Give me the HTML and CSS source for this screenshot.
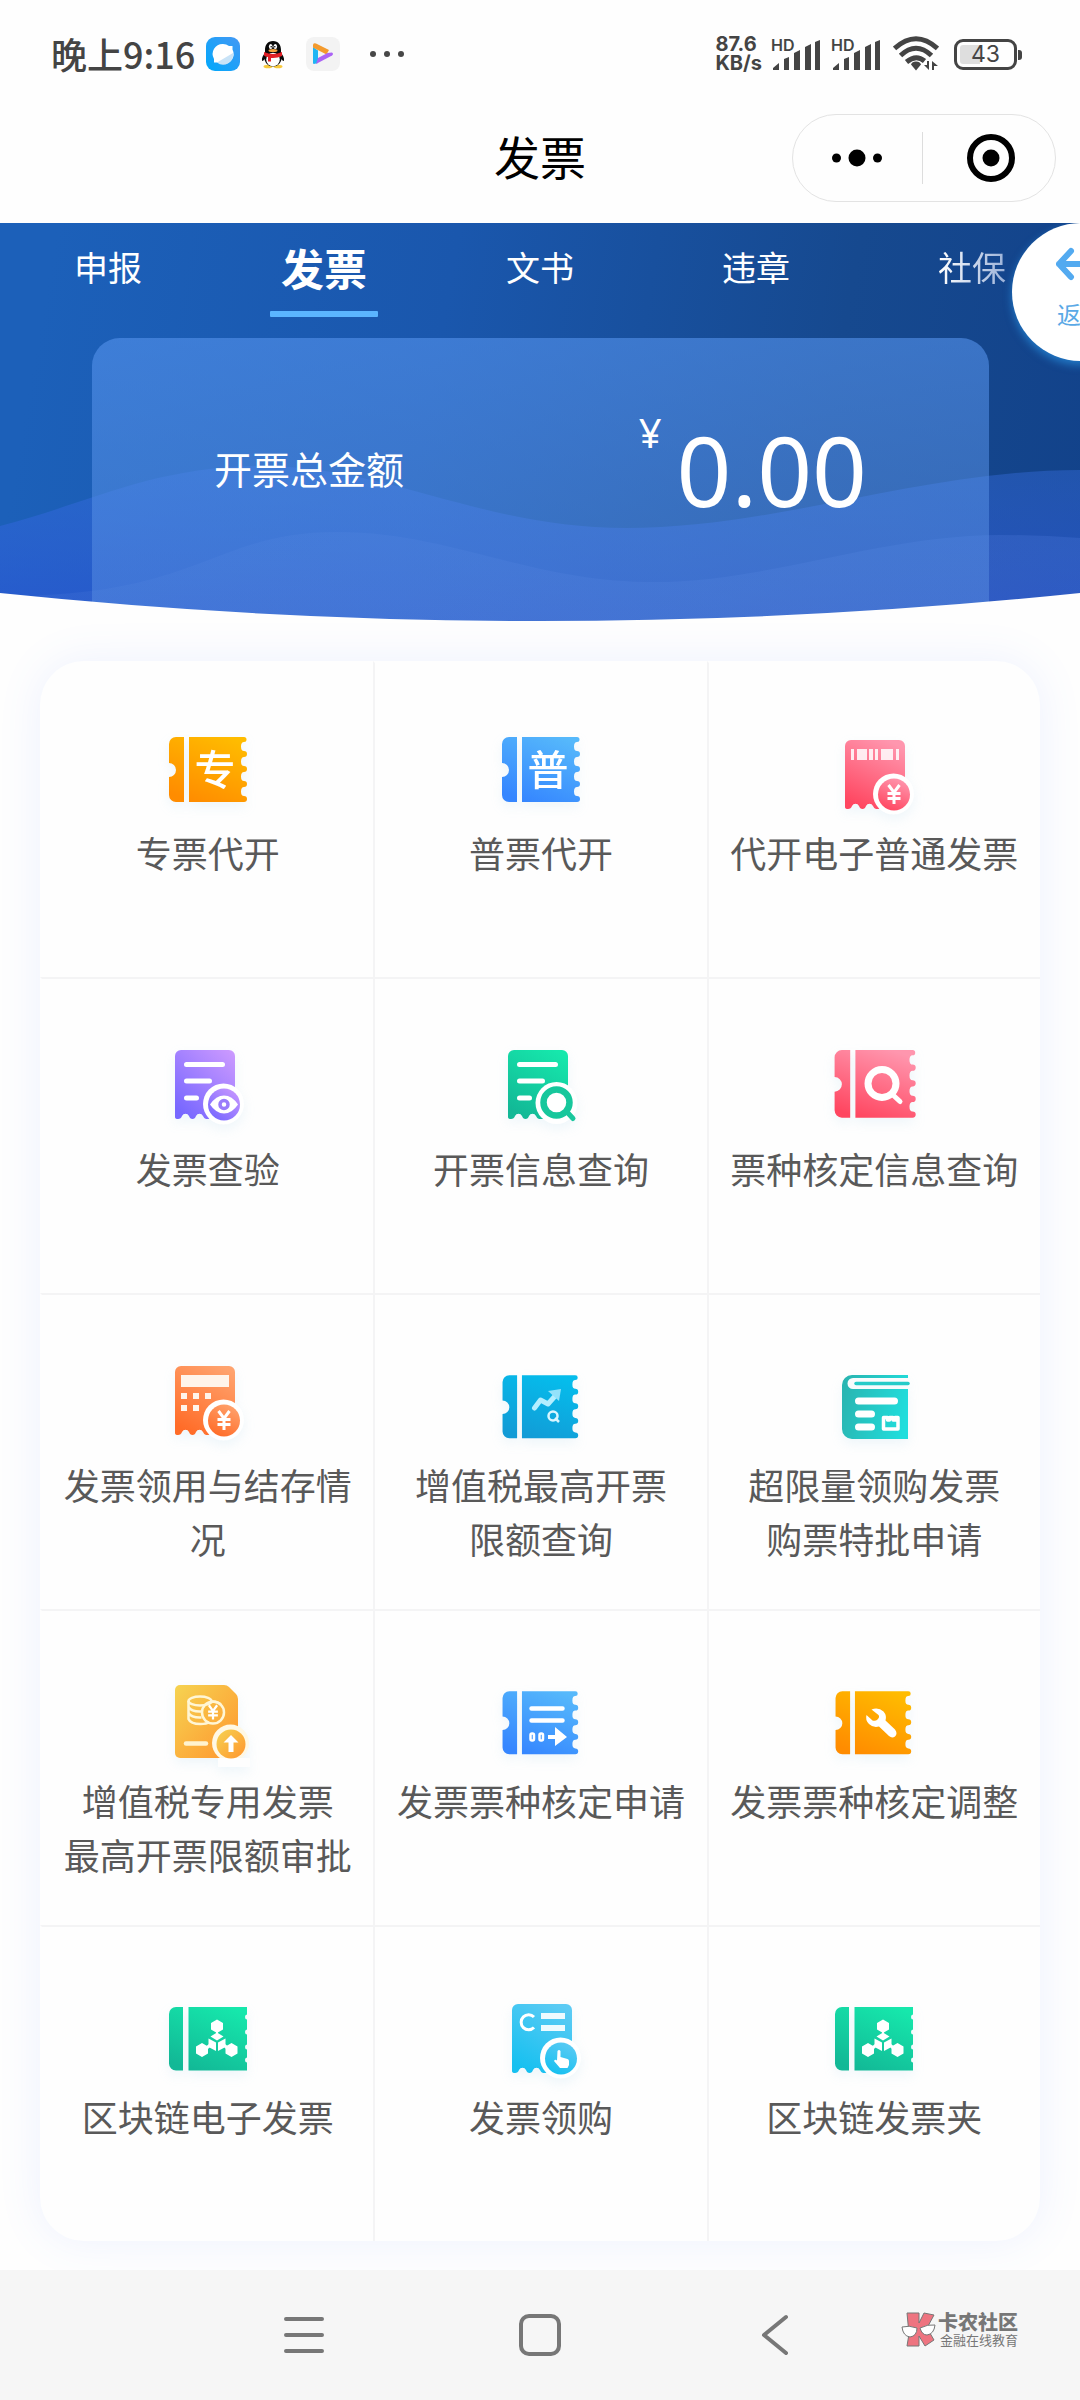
FILE: index.html
```html
<!DOCTYPE html>
<html lang="zh-CN">
<head>
  <meta charset="UTF-8" />
  <meta name="viewport" content="width=device-width, initial-scale=1.0"/>
  <title>发票</title>
  <link rel="stylesheet" href="styles.css">
</head>
<body>
  <!-- shared shapes and gradients -->
  <svg class="defs" width="0" height="0" aria-hidden="true">
    <defs>
      <path id="ticket" d="M30 26v65H22a7 7 0 0 1-7-7V66a7 7 0 0 0 0-14V33a7 7 0 0 1 7-7zM35 26H90a2.5 2.5 0 0 1 0 5a3 4.5 0 0 0 0 9a3 3 0 0 1 0 6a3 4.5 0 0 0 0 9a3 3 0 0 1 0 6a3 4.5 0 0 0 0 9a3 3 0 0 1 0 6a3 4.5 0 0 0 0 9a3 3 0 0 1 0 6H35z"/>
      <path id="receipt" d="M21 90V29a6 6 0 0 1 6-6H75a6 6 0 0 1 6 6V92H52q-2-.5-3-3a3.8 3.8 0 0 0-7 0q-1 3-3.5 3t-3.5-3a3.8 3.8 0 0 0-7 0q-1 3-4 3q-3 0-3-2z"/>
      <path id="book-ticket" d="M29 32v63.5H22a7 7 0 0 1-7-7V39a7 7 0 0 1 7-7zM34.5 32H93v7.5a2 2.5 0 0 0 0 5v10a2 2.5 0 0 0 0 5v10a2 2.5 0 0 0 0 5v8a2 2.5 0 0 0 0 5v8H34.5z"/>
      <g id="yen" fill="none" stroke="#fff" stroke-width="3">
        <path d="M-5.5-9L0-1.5L5.5-9M0-1.5V10M-6.5-.5h13M-6.5 4.5h13"/>
      </g>
      <g id="blocks" fill="#fff">
        <path d="M63 44.5l6 3.5v6.5l-6 3.5-6-3.5V48zM48 68l6 3.5v7l-6 3.5-6-3.5v-7zM77.5 68l6 3.5v7l-6 3.5-6-3.5v-7z"/>
        <path d="M63 57.5l6.5 4-6.5 4-6.5-4zM54.5 63.5l7.5 4V76l-7.5-4zM71.5 63.5l-7.5 4V76l7.5-4z"/>
        <path d="M62 57h2v4h-2zM50 73l5-4 1 3-4 4zM76 73l-5-4-1 3 4 4z"/>
      </g>
      <linearGradient id="orange" x1=".8" y1="0" x2=".3" y2="1"><stop stop-color="#ffbc00"/><stop offset="1" stop-color="#ff8c00"/></linearGradient>
      <linearGradient id="blue" x1=".8" y1="0" x2=".3" y2="1"><stop stop-color="#56b9fb"/><stop offset="1" stop-color="#3586ff"/></linearGradient>
      <linearGradient id="pink" x1=".7" y1="0" x2=".3" y2="1"><stop stop-color="#ff96ae"/><stop offset="1" stop-color="#ff4660"/></linearGradient>
      <linearGradient id="purple" x1="1" y1="0" x2=".2" y2="1"><stop stop-color="#ce9bff"/><stop offset="1" stop-color="#7767ff"/></linearGradient>
      <linearGradient id="green" x1=".8" y1="0" x2=".3" y2="1"><stop stop-color="#16e8ac"/><stop offset="1" stop-color="#12b896"/></linearGradient>
      <linearGradient id="coral" x1=".8" y1="0" x2=".3" y2="1"><stop stop-color="#ffa36e"/><stop offset="1" stop-color="#ff6c28"/></linearGradient>
      <linearGradient id="cyan" x1=".7" y1="0" x2=".3" y2="1"><stop stop-color="#05bdec"/><stop offset="1" stop-color="#129bd6"/></linearGradient>
      <linearGradient id="teal" x1="0" y1=".4" x2="1" y2=".6"><stop stop-color="#29b6b2"/><stop offset="1" stop-color="#20dedd"/></linearGradient>
      <linearGradient id="gold" x1="0" y1="0" x2="1" y2="1"><stop stop-color="#f6d351"/><stop offset="1" stop-color="#ff952e"/></linearGradient>
      <linearGradient id="sky" x1=".8" y1="0" x2=".3" y2="1"><stop stop-color="#5ccbf4"/><stop offset="1" stop-color="#16c0f0"/></linearGradient>
    </defs>
  </svg>

  <header class="top">
    <div class="status">
      <span class="time">晚上9:16</span>
      <svg class="app" viewBox="0 0 34 34" aria-hidden="true">
        <defs><linearGradient id="msg" x1="1" y1="0" x2="0" y2="1"><stop stop-color="#4498f4"/><stop offset="1" stop-color="#00a8fb"/></linearGradient></defs>
        <rect width="34" height="34" rx="9" fill="url(#msg)"/>
        <path d="M17 7a10 10 0 0 1 6 2h3.500v3.500A10 10 0 0 1 17 27a10 10 0 0 1-5.500-1.500H8V22A10 10 0 0 1 17 7z" fill="#fff"/>
        <path d="M27 16a10 10 0 0 1-16 9.500z" fill="#c9e3f7"/>
      </svg>
      <svg class="app" viewBox="0 0 34 34" aria-hidden="true">
        <ellipse cx="12" cy="29.500" rx="4.500" ry="1.800" fill="#f8c93c"/><ellipse cx="22" cy="29.500" rx="4.500" ry="1.800" fill="#f8c93c"/>
        <path d="M17 4c-5.500 0-8 4-8 9v3c-2 2-3.500 5-3 8 1 0 2-1 2.500-2 .5 4 4 7.500 8.500 7.500s8-3.500 8.500-7.500c.5 1 1.500 2 2.500 2 .5-3-1-6-3-8v-3c0-5-2.500-9-8-9z" fill="#090909"/>
        <circle cx="17" cy="22.500" r="6.800" fill="#fff"/>
        <ellipse cx="14.700" cy="9.500" rx="1.800" ry="2.500" fill="#fff"/><ellipse cx="19.300" cy="9.500" rx="1.800" ry="2.500" fill="#fff"/>
        <circle cx="15.200" cy="9.800" r=".8"/><circle cx="18.800" cy="9.800" r=".8"/>
        <ellipse cx="17" cy="13.500" rx="4.500" ry="1.500" fill="#f7a23c"/>
        <path d="M8 15q9 4 18 0v4q-5 2.500-11 2v3.500h-3V20q-3-.5-4-1.500z" fill="#e21f25"/>
      </svg>
      <svg class="app" viewBox="0 0 34 34" aria-hidden="true">
        <rect width="34" height="34" rx="8" fill="#f3f3f3"/>
        <path d="M7 10l5 3.500V26l-4 1q-1 0-1-1z" fill="#1fb5f4"/>
        <path d="M7 7.500q1-2 3-1L23 13l-2.500 4.500L7 10.500z" fill="#f39a2d"/>
        <path d="M26 15.500q2 1.500 0 3L10 27l2-6 9.500-5z" fill="#ab63f5"/>
      </svg>
      <svg class="more" viewBox="0 0 34 8" aria-hidden="true"><g fill="#474747"><circle cx="3" cy="4" r="3"/><circle cx="17" cy="4" r="3"/><circle cx="31" cy="4" r="3"/></g></svg>

      <div class="speed"><span>87.6</span><span>KB/s</span></div>
      <span class="signal"><small>HD</small>
        <svg viewBox="0 0 48 32" aria-hidden="true"><path d="M0 31v-2l6-5v7zM11 31V20l5-2v13zM21 31V14l6-3v20zM32 31V8l6-3v26zM42 31V3l5-2v30z"/></svg>
      </span>
      <span class="signal"><small>HD</small>
        <svg viewBox="0 0 48 32" aria-hidden="true"><path d="M0 31v-2l6-5v7zM11 31V20l5-2v13zM21 31V14l6-3v20zM32 31V8l6-3v26zM42 31V3l5-2v30z"/></svg>
      </span>
      <svg class="wifi" viewBox="0 0 46 36" aria-hidden="true">
        <g fill="none" stroke="#444" stroke-width="5"><path d="M1.500 12.500Q23-7 44.500 12.500M7.500 19.500Q23 5 38.500 19.500M13.500 26Q23 18 31.500 25"/></g>
        <path d="M23 25.500q4 0 5 3l-5 6-5-6q1-3 5-3z" fill="#444"/>
        <path d="M36 25v9l-5-5h3v-4zM39 34v-9l6 5h-4v4z" fill="#444"/>
      </svg>
      <span class="battery">43</span>
    </div>

    <div class="title-bar">
      <h1>发票</h1>
      <div class="capsule">
        <button aria-label="更多"><svg width="50" height="20" viewBox="0 0 50 20"><circle cx="4.500" cy="10" r="4.500"/><circle cx="25" cy="10" r="8.500"/><circle cx="45.500" cy="10" r="4.500"/></svg></button>
        <button aria-label="关闭"><svg width="50" height="50" viewBox="0 0 50 50"><circle cx="25" cy="25" r="21" fill="none" stroke="#000" stroke-width="6"/><circle cx="25" cy="25" r="8.500"/></svg></button>
      </div>
    </div>
  </header>

  <section class="hero">
    <svg class="hero-bg" viewBox="0 0 1080 398" preserveAspectRatio="none" aria-hidden="true">
      <defs>
        <linearGradient id="wave1" x1="0" y1="0" x2="0" y2="1"><stop stop-color="#3a72e6" stop-opacity=".38"/><stop offset="1" stop-color="#2c54d8" stop-opacity=".62"/></linearGradient>
        <linearGradient id="wave2" x1="0" y1="0" x2="1" y2="0"><stop stop-color="#5a86e0" stop-opacity=".15"/><stop offset="1" stop-color="#5a84e8" stop-opacity=".22"/></linearGradient>
      </defs>
      <path fill="url(#wave1)" d="M0 303C90 280 150 244 260 243C390 243 480 305 626 305C780 305 920 247 1080 247V398H0z"/>
      <path fill="url(#wave2)" d="M40 372C200 366 220 309 337 309C450 309 530 359 654 359C770 359 880 312 1000 312Q1040 312 1080 315V398H0z"/>
    </svg>

    <nav class="tabs">
      <a href="#">申报</a>
      <a href="#" class="active">发票</a>
      <a href="#">文书</a>
      <a href="#">违章</a>
      <a href="#" class="faded">社保</a>
    </nav>

    <div class="total">
      <span class="total-label">开票总金额</span>
      <span class="amount"><small>¥</small>0.00</span>
    </div>

    <svg class="hero-curve" viewBox="0 0 1080 28" preserveAspectRatio="none" aria-hidden="true"><path d="M0 0Q540 56 1080 0V29H0z" fill="#fefefe"/></svg>

    <a href="#" class="back">
      <svg width="50" height="34" viewBox="0 0 50 34" aria-hidden="true"><path d="M15 4L3 17L15 30M3 17H47" fill="none" stroke="#53aaf0" stroke-width="6" stroke-linecap="round" stroke-linejoin="round"/></svg>
      <span>返回</span>
    </a>
  </section>

  <main class="menu">
    <a href="#" class="item">
      <svg class="icon" viewBox="0 0 108 108" aria-hidden="true">
        <use href="#ticket" fill="url(#orange)"/>
        <text x="61" y="74" text-anchor="middle">专</text>
      </svg>
      <span>专票代开</span>
    </a>
    <a href="#" class="item">
      <svg class="icon" viewBox="0 0 108 108" aria-hidden="true">
        <use href="#ticket" fill="url(#blue)"/>
        <text x="61" y="74" text-anchor="middle">普</text>
      </svg>
      <span>普票代开</span>
    </a>
    <a href="#" class="item">
      <svg class="icon" viewBox="0 0 108 108" aria-hidden="true">
        <g transform="translate(4 6)">
          <use href="#receipt" fill="url(#pink)"/>
          <path d="M27 32h3v11h-3zM33 32h10v11H33zM45 32h4v11h-4zM51 32h3v11h-3zM57 32h12v11H57zM72 32h3v11h-3z" fill="#fff" fill-opacity=".85"/>
          <circle cx="69.500" cy="77" r="20.500" fill="#fff"/><circle cx="70" cy="77.500" r="16" fill="url(#pink)"/>
          <use href="#yen" x="70" y="77"/>
        </g>
      </svg>
      <span>代开电子普通发票</span>
    </a>

    <a href="#" class="item">
      <svg class="icon" viewBox="0 0 108 108" aria-hidden="true">
        <use href="#receipt" fill="url(#purple)"/>
        <path d="M32.500 37.500h36M32.500 54h23M32.500 71h10" stroke="#fff" stroke-width="5" stroke-linecap="round"/>
        <circle cx="69.500" cy="77" r="20.500" fill="#fff"/><circle cx="70" cy="77.500" r="16" fill="url(#purple)"/>
        <path d="M56 77.500q6-9 14-9t14 9q-6 9-14 9t-14-9z" fill="#fff"/>
        <circle cx="70" cy="77.500" r="4" fill="#fff" stroke="#9a7bfb" stroke-width="3.500"/>
      </svg>
      <span>发票查验</span>
    </a>
    <a href="#" class="item">
      <svg class="icon" viewBox="0 0 108 108" aria-hidden="true">
        <use href="#receipt" fill="url(#green)"/>
        <path d="M32.500 37.500h36M32.500 54h23M32.500 71h10" stroke="#fff" stroke-width="5" stroke-linecap="round"/>
        <circle cx="69.500" cy="76" r="21" fill="#fff"/>
        <path d="M80 85l6 6.500" stroke="#17c79c" stroke-width="5" stroke-linecap="round"/>
        <circle cx="69.500" cy="75.500" r="13" fill="none" stroke="#17c79c" stroke-width="6.500"/>
      </svg>
      <span>开票信息查询</span>
    </a>
    <a href="#" class="item">
      <svg class="icon" viewBox="0 0 108 108" aria-hidden="true">
        <use href="#ticket" fill="url(#pink)" transform="translate(-1 -4) scale(1.04)"/>
        <circle cx="62" cy="56.500" r="14" fill="none" stroke="#fff" stroke-width="7"/>
        <path d="M73 68l7 6.500" stroke="#fff" stroke-width="5" stroke-linecap="round"/>
      </svg>
      <span>票种核定信息查询</span>
    </a>

    <a href="#" class="item">
      <svg class="icon" viewBox="0 0 108 108" aria-hidden="true">
        <use href="#receipt" fill="url(#coral)"/>
        <path d="M27 32h48v12H27zM27 50h6v6h-6zM39 50h6v6h-6zM51 50h6v6h-6zM27 62h6v6h-6zM39 62h6v6h-6z" fill="#fff4ea"/>
        <circle cx="69.500" cy="77" r="20.500" fill="#fff"/><circle cx="70" cy="77.500" r="16" fill="url(#coral)"/>
        <use href="#yen" x="70" y="77"/>
      </svg>
      <span>发票领用与结存情况</span>
    </a>
    <a href="#" class="item">
      <svg class="icon" viewBox="0 0 108 108" aria-hidden="true">
        <use href="#ticket" fill="url(#cyan)" transform="translate(1 7) scale(.97)"/>
        <path d="M47.500 65l6-8 7.500 4 8-9" fill="none" stroke="#b4eeff" stroke-width="5" stroke-linecap="round" stroke-linejoin="round"/>
        <path d="M61 48l13-2-2 12z" fill="#94e2fa"/>
        <circle cx="66" cy="73" r="4.500" fill="none" stroke="#d8f6ff" stroke-width="2.500"/><path d="M68 75l4 4" stroke="#d8f6ff" stroke-width="2.500"/>
      </svg>
      <span>增值税最高开票<br>限额查询</span>
    </a>
    <a href="#" class="item">
      <svg class="icon" viewBox="0 0 108 108" aria-hidden="true">
        <path d="M88 32H32a10 10 0 0 0-10 10v44a10 10 0 0 0 10 10h56V46H33a5.500 5.500 0 0 1 0-11h55z" fill="url(#teal)"/>
        <path d="M36 40.500h52" stroke="#26cbc9" stroke-width="3.500" stroke-linecap="round"/>
        <path d="M38.500 58h36M38.500 71h13M38.500 84h13" stroke="#fff" stroke-width="7" stroke-linecap="round"/>
        <path d="M63.500 74.500h4v2.500h2v-2.500h3.500V77h2v-2.500h3V86h-14.500z" fill="none" stroke="#fff" stroke-width="3.500" stroke-linejoin="round"/>
      </svg>
      <span>超限量领购发票<br>购票特批申请</span>
    </a>

    <a href="#" class="item">
      <svg class="icon" viewBox="0 0 108 108" aria-hidden="true">
        <path d="M26 26h44q3 0 5 2l7 7q2 2 2 5v59H26a5 5 0 0 1-5-5V31a5 5 0 0 1 5-5z" fill="url(#gold)"/>
        <g fill="none" stroke="#fff6d5" stroke-width="2.500"><ellipse cx="46" cy="42" rx="11.500" ry="4.500"/><path d="M34.500 42v18q2 5 12 5 6 0 9-2M34.500 48q3 5 13 4.500M34.500 54q3 5 13 4.500M57 43q7-1 10 3"/><circle cx="59" cy="53.500" r="11"/></g>
        <use href="#yen" transform="translate(59 53) scale(.75)"/>
        <path d="M32 84.500h20" stroke="#fff3cf" stroke-width="4.500" stroke-linecap="round"/>
        <circle cx="76.500" cy="84" r="18.500" fill="#fff8e4"/><path d="M64 99h32v9H64z" fill="#fefefe"/><circle cx="77" cy="85" r="14.500" fill="url(#gold)"/>
        <path d="M77 76l7.500 7.500h-5V93h-5v-9.500h-5z" fill="#fff"/>
      </svg>
      <span>增值税专用发票<br>最高开票限额审批</span>
    </a>
    <a href="#" class="item">
      <svg class="icon" viewBox="0 0 108 108" aria-hidden="true">
        <use href="#ticket" fill="url(#blue)" transform="translate(1 7) scale(.97)"/>
        <path d="M44.500 49.500h31M44.500 61.500h31" stroke="#fff" stroke-width="4.500" stroke-linecap="round"/>
        <g fill="none" stroke="#fff" stroke-width="2.500"><rect x="43.500" y="74.500" width="3.500" height="7" rx="1.500"/><rect x="52.500" y="74.500" width="3.500" height="7" rx="1.500"/></g>
        <path d="M61 76h7v-8l12 10-12 9v-7h-7z" fill="#fff"/>
      </svg>
      <span>发票票种核定申请</span>
    </a>
    <a href="#" class="item">
      <svg class="icon" viewBox="0 0 108 108" aria-hidden="true">
        <use href="#ticket" fill="url(#orange)" transform="translate(1 7) scale(.97)"/>
        <path d="M51.500 50.500q7-2.500 12 2 3.500 4 2 9l9.500 9q3 4 0 7-3 2-6-.5l-10-9.500q-6 1.500-10-2.500t-2.500-9l6 5.500q3 1 5-1 2.500-2.500 1-4.500z" fill="#fff"/>
      </svg>
      <span>发票票种核定调整</span>
    </a>

    <a href="#" class="item">
      <svg class="icon" viewBox="0 0 108 108" aria-hidden="true">
        <use href="#book-ticket" fill="url(#green)"/>
        <use href="#blocks"/>
      </svg>
      <span>区块链电子发票</span>
    </a>
    <a href="#" class="item">
      <svg class="icon" viewBox="0 0 108 108" aria-hidden="true">
        <g transform="translate(4 6)">
          <use href="#receipt" fill="url(#sky)"/>
          <path d="M43 36a7.500 7.500 0 1 0 0 10.500" fill="none" stroke="#fff" stroke-width="3"/>
          <path d="M50 32h24v6H50zM50 44h24v6H50z" fill="#fff" fill-opacity=".9"/>
          <circle cx="69.500" cy="77" r="20.500" fill="#fff"/><circle cx="70" cy="77.500" r="16" fill="url(#sky)"/>
          <path d="M66.500 70q1.500-2 3 0v6l7 2q1.500.5 1.500 2v4l-1.500 3h-7.500l-6-7q1-2 3-.5z" fill="#fff"/>
        </g>
      </svg>
      <span>发票领购</span>
    </a>
    <a href="#" class="item">
      <svg class="icon" viewBox="0 0 108 108" aria-hidden="true">
        <use href="#book-ticket" fill="url(#green)"/>
        <use href="#blocks"/>
      </svg>
      <span>区块链发票夹</span>
    </a>
  </main>

  <footer class="system-nav">
    <button aria-label="菜单"><svg viewBox="0 0 44 44"><path d="M4 6h36M4 22h36M4 38h36"/></svg></button>
    <button aria-label="主页"><svg viewBox="0 0 44 44"><rect x="3" y="3" width="38" height="38" rx="8"/></svg></button>
    <button aria-label="返回"><svg viewBox="0 0 44 44"><path d="M32 4L10 22L32 40"/></svg></button>
    <div class="watermark">
      <svg viewBox="0 0 36 36" aria-hidden="true">
        <g stroke="#777" stroke-width="1">
          <path d="M6 1h12v10l5-10 10 2-7 13 7 12-9 6-6-10v10H6l2-12z" fill="#ee7480"/>
          <path d="M1 15q7-2 15 1 0 8-7 9-7-1-8-10zM19 16q8-4 15-3-1 9-8 10-5 0-7-7z" fill="#fff"/>
        </g>
      </svg>
      <div><strong>卡农社区</strong><span>金融在线教育</span></div>
    </div>
  </footer>
</body>
</html>
```
FILE: styles.css
```css
* {
  box-sizing: border-box;
}

body {
  margin: 0;
  min-height: 100vh;
  display: flex;
  flex-direction: column;
  background-color: #fefefe;
  color: #595959;
  font-family: "Noto Sans CJK SC", "Noto Sans", sans-serif;
}

a {
  color: inherit;
  text-decoration: none;
}

button {
  padding: 0;
  border: none;
  background: none;
  cursor: pointer;
  display: flex;
  align-items: center;
  justify-content: center;
}

.defs {
  position: absolute;
}

/* Status bar */
.status {
  height: 108px;
  padding: 0 63px 0 51px;
  display: flex;
  align-items: center;
  color: #444;
}

.time {
  margin-right: 11px;
  padding-bottom: 3px;
  font-size: 36px;
  font-weight: 500;
}

.app {
  width: 34px;
  height: 34px;
  margin-right: 16px;
}

.more {
  width: 34px;
  height: 8px;
  margin-left: 14px;
}

.speed {
  margin-left: auto;
  margin-right: 11px;
  font-family: Inter, sans-serif;
  font-size: 20px;
  line-height: 19px;
  font-weight: 700;
}

.speed span {
  display: block;
}

.signal {
  position: relative;
  width: 48px;
  height: 34px;
  margin-right: 12px;
}

.signal small {
  position: absolute;
  top: 0;
  left: -2px;
  font-family: Inter, sans-serif;
  font-size: 16px;
  line-height: 16px;
  font-weight: 600;
}

.signal svg {
  display: block;
  width: 48px;
  height: 32px;
  margin-top: 2px;
  fill: #444;
}

.wifi {
  width: 46px;
  height: 36px;
  margin-right: 15px;
}

.battery {
  position: relative;
  width: 63px;
  height: 31px;
  border: 3px solid #444;
  border-radius: 9px;
  background: linear-gradient(90deg, #dedede 40%, transparent 40%) content-box;
  padding: 3px;
  font-family: Inter, sans-serif;
  font-size: 23px;
  line-height: 19px;
  text-align: center;
}

.battery::after {
  content: "";
  position: absolute;
  right: -8px;
  top: 8px;
  width: 4px;
  height: 10px;
  border-radius: 0 3px 3px 0;
  background-color: #444;
}

/* Title bar */
.title-bar {
  height: 115px;
  padding: 6px 24px 21px;
  display: grid;
  grid-template-columns: 1fr auto 1fr;
  align-items: center;
  color: #000;
}

.title-bar h1 {
  grid-column: 2;
  margin: 0 0 6px;
  font-size: 46px;
  line-height: 60px;
  font-weight: 400;
}

.capsule {
  justify-self: end;
  width: 264px;
  height: 88px;
  display: flex;
  align-items: center;
  border: 1px solid #e3e3e3;
  border-radius: 44px;
}

.capsule button {
  flex: 1;
  height: 52px;
}

.capsule button + button {
  padding-left: 4px;
  border-left: 1px solid #ddd;
}

/* Blue header */
.hero {
  position: relative;
  height: 398px;
  overflow: hidden;
  background: linear-gradient(100deg, #1c60b9 5%, #1a57ad 40%, #16498f 75%, #12428a 100%);
  color: #fff;
}

.hero-bg {
  position: absolute;
  top: 0;
  left: 0;
  width: 100%;
  height: 100%;
}

.hero-curve {
  position: absolute;
  bottom: 0;
  left: 0;
  width: 100%;
  height: 28px;
}

.tabs {
  position: relative;
  display: flex;
  height: 94px;
}

.tabs a {
  flex: 1;
  padding-top: 2px;
  font-size: 34px;
  line-height: 84px;
  text-align: center;
}

.tabs .active {
  font-size: 43px;
  font-weight: 700;
}

.tabs .active::after {
  content: "";
  display: block;
  width: 108px;
  height: 6px;
  margin: 2px auto 0;
  border-radius: 1px;
  background-color: #5bb5ff;
}

.tabs .faded {
  background: linear-gradient(90deg, #fff 35%, #8da7d3 70%);
  -webkit-background-clip: text;
  background-clip: text;
  color: transparent;
}

.total {
  position: relative;
  height: 283px;
  margin: 21px 91px 0 92px;
  padding: 0 122px 19px;
  display: flex;
  align-items: center;
  justify-content: space-between;
  border-radius: 28px 28px 0 0;
  background: linear-gradient(180deg, rgba(85, 147, 237, 0.6), rgba(96, 148, 228, 0.42));
}

.total-label {
  padding-bottom: 6px;
  font-size: 38px;
}

.amount {
  display: flex;
  align-items: flex-start;
  font-family: "Noto Sans", sans-serif;
  font-size: 96px;
  line-height: 96px;
}

.amount small {
  margin-right: 15px;
  font-size: 40px;
  line-height: 22px;
}

.back {
  position: absolute;
  top: 0;
  right: -70px;
  width: 138px;
  height: 138px;
  padding-top: 24px;
  display: flex;
  flex-direction: column;
  align-items: center;
  gap: 16px;
  border-radius: 50%;
  background-color: #fff;
  box-shadow: 0 4px 8px rgba(40, 145, 225, 0.7);
  color: #5aa9e6;
  font-size: 24px;
  line-height: 34px;
}

/* Menu grid */
.menu {
  margin: 40px 40px 29px;
  display: grid;
  grid-template-columns: repeat(3, 1fr);
  grid-auto-rows: 316px;
  border-radius: 44px;
  background-color: #fefefe;
  box-shadow: 0 0 44px rgba(90, 130, 255, 0.1);
}

.item {
  padding: 48px 15px 0;
  display: flex;
  flex-direction: column;
  align-items: center;
  gap: 6px;
  border-left: 2px solid #f4f4f5;
  border-top: 2px solid #f4f4f5;
  font-size: 36px;
  line-height: 54px;
  text-align: center;
}

.item:nth-child(3n+1) {
  border-left-color: transparent;
}

.item:nth-child(-n+3) {
  border-top-color: transparent;
}

.icon {
  flex: none;
  width: 108px;
  height: 108px;
  filter: drop-shadow(0 5px 6px rgba(120, 190, 220, 0.12));
}

.icon text {
  fill: #fff;
  font-size: 41px;
  font-weight: 500;
}

/* Bottom navigation */
.system-nav {
  position: relative;
  flex: 1;
  min-height: 130px;
  display: flex;
  align-items: center;
  justify-content: center;
  background-color: #f6f6f6;
}

.system-nav button {
  width: 236px;
  height: 100%;
}

.system-nav button svg {
  width: 44px;
  height: 44px;
  fill: none;
  stroke: #777;
  stroke-width: 4;
  stroke-linecap: round;
  stroke-linejoin: round;
}

.watermark {
  position: absolute;
  top: 42px;
  right: 62px;
  display: flex;
  gap: 1px;
  color: #777;
}

.watermark svg {
  width: 36px;
  height: 36px;
}

.watermark strong,
.watermark span {
  display: block;
  font-size: 20px;
  line-height: 20px;
  font-weight: 900;
}

.watermark span {
  padding-left: 2px;
  font-size: 13px;
  line-height: 15px;
  font-weight: 400;
}
```
